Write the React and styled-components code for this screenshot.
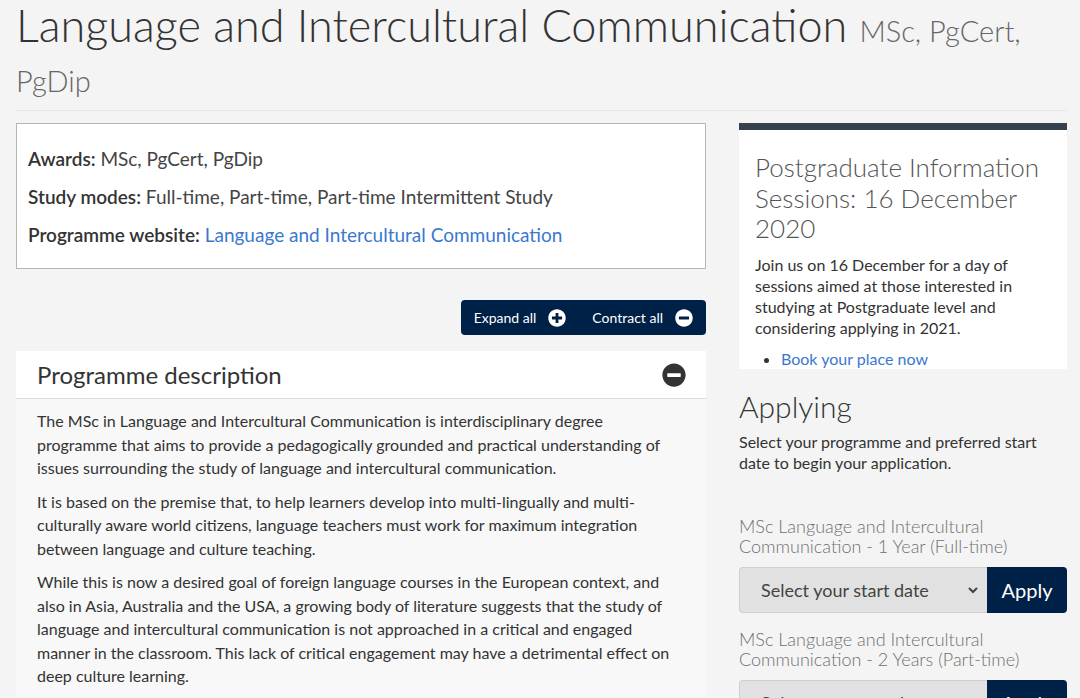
import React from 'react';
import styled, { createGlobalStyle } from 'styled-components';
import { FaPlusCircle, FaMinusCircle } from 'react-icons/fa';

const GlobalStyle = createGlobalStyle`
  html, body {
    margin: 0;
    padding: 0;
    background: #f4f4f4;
    font-family: Lato, "Open Sans", sans-serif;
    color: #333;
  }
  * {
    box-sizing: border-box;
  }
`;

const Page = styled('div')`
  padding: 0 13px 0 16px;
  height: 698px;
  overflow: hidden;
`;

const Header = styled('header')`
  border-bottom: 1px solid #e6e6e6;
  padding-bottom: 10px;
`;

const Title = styled('h1')`
  margin: 0;
  font-size: 45px;
  font-weight: 300;
  line-height: 50px;
  color: #333;
`;

const Awards = styled('small')`
  font-size: 29px;
  line-height: 1;
  color: #666;
`;

const Columns = styled('div')`
  display: grid;
  grid-template-columns: 690px 328px;
  column-gap: 33px;
  margin-top: 12px;
  align-items: start;
`;

const MainColumn = styled('main')`
  display: flex;
  flex-direction: column;
`;

const InfoBox = styled('div')`
  background: #fff;
  border: 1px solid #b5b5b5;
  padding: 16px 11px 14px;
`;

const InfoRow = styled('div')`
  font-size: 19px;
  line-height: 38px;
  color: #444;
`;

const InfoLabel = styled('strong')`
  font-weight: 600;
  color: #333;
`;

const Link = styled('a')`
  color: #3a78d0;
  text-decoration: none;
`;

const Toolbar = styled('div')`
  display: flex;
  justify-content: flex-end;
  margin-top: 31px;
`;

const ButtonGroup = styled('div')`
  display: flex;
  align-items: center;
  height: 35px;
  padding: 0 13px;
  gap: 26px;
  background: #002147;
  border-radius: 4px;
`;

const ToggleButton = styled('button')`
  display: flex;
  align-items: center;
  gap: 12px;
  border: 0;
  padding: 0;
  background: none;
  color: #fff;
  font-family: inherit;
  font-size: 14px;
  cursor: pointer;

  svg {
    width: 18px;
    height: 18px;
  }
`;

const Accordion = styled('section')`
  margin-top: 16px;
  background: #f8f8f8;
`;

const AccordionHeader = styled('div')`
  display: flex;
  align-items: center;
  justify-content: space-between;
  height: 48px;
  padding: 0 20px 0 21px;
  background: #fff;
  border-bottom: 1px solid #dcdcdc;

  svg {
    width: 24px;
    height: 24px;
    color: #333;
  }
`;

const AccordionTitle = styled('h2')`
  margin: 0;
  font-size: 24px;
  font-weight: 400;
  color: #333;
`;

const AccordionBody = styled('div')`
  padding: 10px 21px 20px;
`;

const Paragraph = styled('p')`
  margin: 0 0 10px;
  font-size: 16px;
  line-height: 23.5px;
  color: #333;
`;

const Sidebar = styled('aside')`
  display: flex;
  flex-direction: column;
`;

const EventCard = styled('div')`
  background: #fff;
  border-top: 7px solid #36414b;
  padding: 22px 16px 0;
`;

const EventTitle = styled('h3')`
  margin: 0;
  font-size: 26px;
  font-weight: 300;
  line-height: 30.5px;
  color: #555;
`;

const CardText = styled('p')`
  margin: 10px 0 0;
  font-size: 16px;
  line-height: 21px;
  color: #333;
`;

const CardList = styled('ul')`
  margin: 10px 0 0;
  padding: 0 0 0 26px;
  font-size: 16px;
  line-height: 21px;
`;

const ApplyHeading = styled('h3')`
  margin: 20px 0 0;
  font-size: 30px;
  font-weight: 300;
  line-height: 34px;
  color: #333;
`;

const ApplyIntro = styled('p')`
  margin: 8px 0 0;
  font-size: 16px;
  line-height: 21px;
  color: #333;
`;

const ProgrammeLabel = styled('div')`
  margin-top: ${(p) => (p.first ? '43px' : '16px')};
  font-size: 18px;
  font-weight: 300;
  line-height: 20px;
  color: #707070;
`;

const ApplyRow = styled('div')`
  display: flex;
  height: 46px;
  margin-top: 11px;
`;

const StartSelect = styled('div')`
  flex: 1;
  display: flex;
  align-items: center;
  justify-content: space-between;
  padding: 0 8px 0 21px;
  background: #e1e1e1;
  border: 1px solid #cfcfcf;
  border-right: 0;
  border-radius: 4px 0 0 4px;
  font-size: 18px;
  color: #444;

  svg {
    width: 12px;
    height: 12px;
  }
`;

const ApplyButton = styled('button')`
  width: 80px;
  border: 0;
  border-radius: 0 4px 4px 0;
  background: #002147;
  color: #fff;
  font-family: inherit;
  font-size: 20px;
  cursor: pointer;
`;

const Chevron = () => (
  <svg viewBox="0 0 12 12" fill="none" stroke="#444" strokeWidth="2" strokeLinecap="round">
    <path d="M2.5 4.5 6 8l3.5-3.5" />
  </svg>
);

const programmes = [
  'MSc Language and Intercultural Communication - 1 Year (Full-time)',
  'MSc Language and Intercultural Communication - 2 Years (Part-time)',
];

export default function App() {
  return (
    <>
      <GlobalStyle />
      <Page>
        <Header>
          <Title>
            Language and Intercultural Communication <Awards>MSc, PgCert, PgDip</Awards>
          </Title>
        </Header>

        <Columns>
          <MainColumn>
            <InfoBox>
              <InfoRow>
                <InfoLabel>Awards:</InfoLabel> MSc, PgCert, PgDip
              </InfoRow>
              <InfoRow>
                <InfoLabel>Study modes:</InfoLabel> Full-time, Part-time, Part-time Intermittent Study
              </InfoRow>
              <InfoRow>
                <InfoLabel>Programme website:</InfoLabel>{' '}
                <Link href="#">Language and Intercultural Communication</Link>
              </InfoRow>
            </InfoBox>

            <Toolbar>
              <ButtonGroup>
                <ToggleButton>
                  Expand all <FaPlusCircle />
                </ToggleButton>
                <ToggleButton>
                  Contract all <FaMinusCircle />
                </ToggleButton>
              </ButtonGroup>
            </Toolbar>

            <Accordion>
              <AccordionHeader>
                <AccordionTitle>Programme description</AccordionTitle>
                <FaMinusCircle />
              </AccordionHeader>
              <AccordionBody>
                <Paragraph>
                  The MSc in Language and Intercultural Communication is interdisciplinary degree
                  programme that aims to provide a pedagogically grounded and practical understanding
                  of issues surrounding the study of language and intercultural communication.
                </Paragraph>
                <Paragraph>
                  It is based on the premise that, to help learners develop into multi-lingually and
                  multi-culturally aware world citizens, language teachers must work for maximum
                  integration between language and culture teaching.
                </Paragraph>
                <Paragraph>
                  While this is now a desired goal of foreign language courses in the European
                  context, and also in Asia, Australia and the USA, a growing body of literature
                  suggests that the study of language and intercultural communication is not
                  approached in a critical and engaged manner in the classroom. This lack of critical
                  engagement may have a detrimental effect on deep culture learning.
                </Paragraph>
              </AccordionBody>
            </Accordion>
          </MainColumn>

          <Sidebar>
            <EventCard>
              <EventTitle>Postgraduate Information Sessions: 16 December 2020</EventTitle>
              <CardText>
                Join us on 16 December for a day of sessions aimed at those interested in studying
                at Postgraduate level and considering applying in 2021.
              </CardText>
              <CardList>
                <li>
                  <Link href="#">Book your place now</Link>
                </li>
              </CardList>
            </EventCard>

            <ApplyHeading>Applying</ApplyHeading>
            <ApplyIntro>
              Select your programme and preferred start date to begin your application.
            </ApplyIntro>

            {programmes.map((name, i) => (
              <React.Fragment key={name}>
                <ProgrammeLabel first={i === 0}>{name}</ProgrammeLabel>
                <ApplyRow>
                  <StartSelect>
                    Select your start date
                    <Chevron />
                  </StartSelect>
                  <ApplyButton>Apply</ApplyButton>
                </ApplyRow>
              </React.Fragment>
            ))}
          </Sidebar>
        </Columns>
      </Page>
    </>
  );
}
